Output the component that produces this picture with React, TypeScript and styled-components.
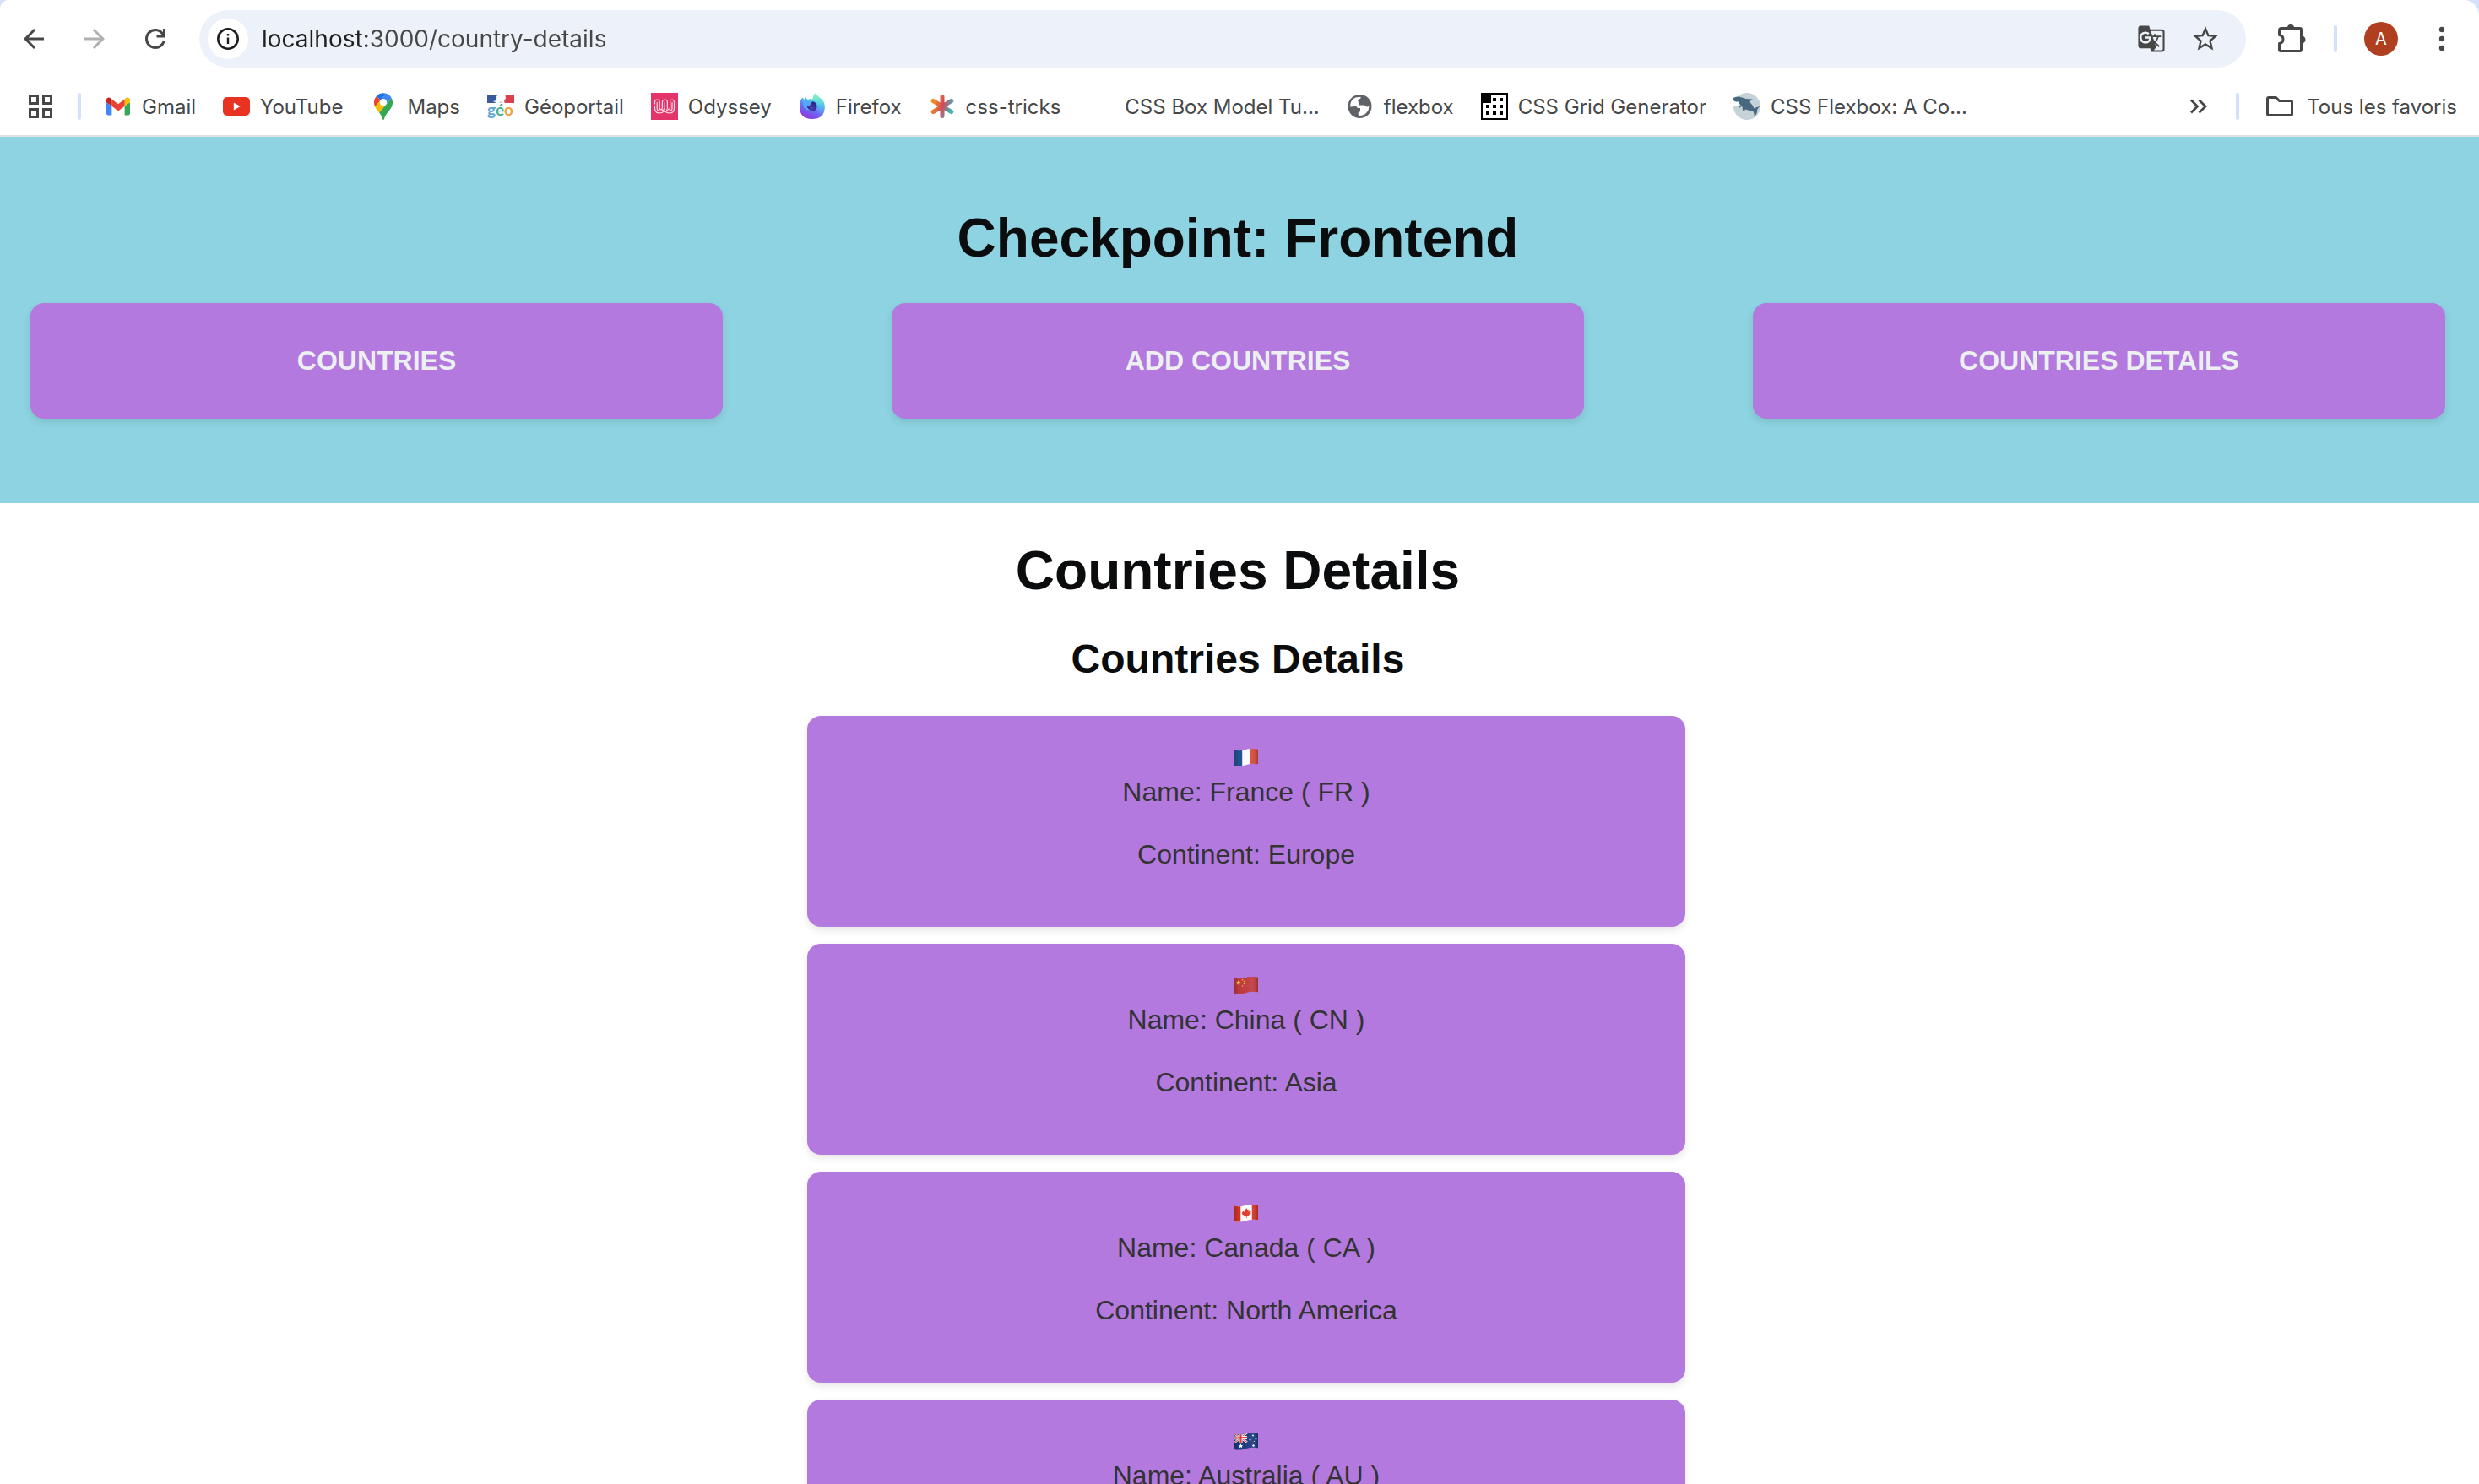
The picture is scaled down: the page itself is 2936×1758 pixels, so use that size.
import React from "react";
import styled, { createGlobalStyle } from "styled-components";
import { MdGTranslate } from "react-icons/md";

const GlobalStyle = createGlobalStyle`
  *, *::before, *::after { box-sizing: border-box; }
  body { margin: 0; background: #d3e1fb; }
  button { border: 0; background: none; padding: 0; font: inherit; color: inherit; cursor: pointer; }
  a { color: inherit; text-decoration: none; }
  svg { display: block; flex: none; }
`;

const Window = styled.div`
  display: flex;
  flex-direction: column;
  height: 100vh;
  overflow: hidden;
`;

/* ---------- browser chrome ---------- */

const Chrome = styled.header`
  flex: none;
  background: #fff;
  border-radius: 10px 18px 0 0;
  border-bottom: 2px solid #dfe1e3;
  color: #474747;
  font-family: Inter, Roboto, sans-serif;
`;

const Toolbar = styled.div`
  display: flex;
  align-items: center;
  height: 92px;
  padding: 0 16px 0 12px;
`;

const NavButtons = styled.div`
  display: flex;
  gap: 16px;
  margin-right: 24px;
`;

const IconButton = styled.button<{ $faded?: boolean }>`
  display: grid;
  place-items: center;
  width: 56px;
  height: 56px;
  color: ${(p) => (p.$faded ? "#b0b0b0" : "#474747")};
`;

const AddressBar = styled.form`
  display: flex;
  flex: 1;
  align-items: center;
  height: 68px;
  padding: 0 20px 0 10px;
  border-radius: 34px;
  background: #edf2fa;
`;

const SiteInfo = styled.button`
  display: grid;
  place-items: center;
  width: 48px;
  height: 48px;
  border-radius: 50%;
  background: #fff;
  color: #1f1f1f;
`;

const AddressInput = styled.input`
  flex: 1;
  min-width: 0;
  height: 40px;
  margin-left: 16px;
  padding: 0;
  border: 0;
  outline: 0;
  background: linear-gradient(90deg, #1f1f1f 124px, #474747 124px);
  background-clip: text;
  -webkit-background-clip: text;
  -webkit-text-fill-color: transparent;
  font-family: inherit;
  font-size: 28px;
`;

const AddressActions = styled.div`
  display: flex;
  gap: 8px;
`;

const ToolbarEnd = styled.div`
  display: flex;
  align-items: center;
  margin-left: 26px;
`;

const Divider = styled.span`
  flex: none;
  width: 4px;
  height: 32px;
  border-radius: 2px;
  background: #d3e1fb;
`;

const Avatar = styled.button`
  width: 40px;
  height: 40px;
  margin: 0 24px 0 32px;
  border-radius: 50%;
  background: #b03f20;
  color: #fff;
  font-size: 20px;
`;

const ExtensionSlot = styled.div`
  margin-right: 22px;
`;

const BookmarkBar = styled.nav`
  display: flex;
  align-items: center;
  height: 68px;
  padding: 0 26px 0 20px;
  font-size: 24px;
`;

const BookmarkList = styled.ul`
  display: flex;
  flex: 1;
  gap: 32px;
  min-width: 0;
  margin: 0 0 0 28px;
  padding: 0;
  list-style: none;
`;

const Bookmark = styled.a`
  display: flex;
  align-items: center;
  gap: 12px;
  white-space: nowrap;
`;

const Favicon = styled.span`
  display: grid;
  place-items: center;
  width: 32px;
  height: 32px;
`;

const BookmarkEnd = styled.div`
  display: flex;
  align-items: center;
  gap: 16px;
`;

const AppsSlot = styled.div`
  display: flex;
  align-items: center;
  gap: 16px;
`;

const AllBookmarks = styled.button`
  display: flex;
  align-items: center;
  gap: 16px;
  margin-left: 16px;
  white-space: nowrap;
`;

/* ---------- page ---------- */

const Page = styled.div`
  flex: 1;
  min-height: 0;
  overflow-y: auto;
  scrollbar-width: none;
  background: #fff;
  color: #0a0c0d;
  font-family: "Liberation Sans", Arial, sans-serif;
  font-size: 32px;
  line-height: 37px;
`;

const Banner = styled.header`
  padding: 84px 40px 100px 36px;
  background: #8dd3e1;
`;

const Title = styled.h1`
  margin: 0 0 41px;
  font-size: 64px;
  line-height: 72px;
  text-align: center;
`;

const Subtitle = styled.h2`
  margin: 0 0 39px;
  font-size: 48px;
  line-height: 56px;
  text-align: center;
`;

const Menu = styled.nav`
  display: grid;
  grid-template-columns: repeat(3, 1fr);
  gap: 200px;
`;

const MenuLink = styled.a`
  padding: 50px 32px;
  border-radius: 16px;
  background: #b379df;
  box-shadow: 0 4px 10px rgba(0, 0, 0, 0.1);
  color: #ecf0f1;
  font-weight: 700;
  text-align: center;
  text-transform: uppercase;
`;

const Main = styled.main`
  padding: 44px 4px 40px 0;
`;

const CardList = styled.ul`
  display: flex;
  flex-direction: column;
  align-items: center;
  gap: 20px;
  margin: 0;
  padding: 0 0 0 20px;
  list-style: none;
`;

const Card = styled.li`
  display: flex;
  flex-direction: column;
  align-items: center;
  width: 100%;
  max-width: 1040px;
  padding: 39px 32px 67px;
  border-radius: 16px;
  background: #b379df;
  box-shadow: 0 4px 10px rgba(0, 0, 0, 0.1);
  color: #333;
`;

const CardLine = styled.p<{ $spaced?: boolean }>`
  margin: ${(p) => (p.$spaced ? "37px" : "12px")} 0 0;
`;

/* ---------- toolbar icons ---------- */

const Glyph = ({ d, size = 36 }: { d: string; size?: number }) => (
  <svg width={size} height={size} viewBox="0 0 24 24" fill="currentColor" aria-hidden="true">
    <path d={d} />
  </svg>
);

const BACK = "M20 11H7.83l5.59-5.59L12 4l-8 8 8 8 1.41-1.41L7.83 13H20v-2z";
const FORWARD = "M4 11h12.17l-5.59-5.59L12 4l8 8-8 8-1.41-1.41L16.17 13H4v-2z";
const RELOAD =
  "M12 20q-3.35 0-5.675-2.325T4 12q0-3.35 2.325-5.675T12 4q1.725 0 3.3.713T18 6.75V4h2v7h-7V9h4.2q-.8-1.4-2.188-2.2T12 6Q9.5 6 7.75 7.75T6 12q0 2.5 1.75 4.25T12 18q1.925 0 3.475-1.1T17.65 14h2.1q-.7 2.65-2.85 4.325T12 20z";
const STAR =
  "m22 9.24-7.19-.62L12 2 9.19 8.63 2 9.24l5.46 4.73L5.82 21 12 17.27 18.18 21l-1.63-7.03L22 9.24zM12 15.4l-3.76 2.27 1-4.28-3.32-2.88 4.38-.38L12 6.1l1.71 4.04 4.38.38-3.32 2.88 1 4.28L12 15.4z";

const InfoIcon = () => (
  <svg width="28" height="28" viewBox="0 0 28 28" aria-hidden="true">
    <circle cx="14" cy="14" r="11.7" fill="none" stroke="currentColor" strokeWidth="2.6" />
    <path d="M12.8 12.4h2.4v7.6h-2.4zM12.8 8h2.4v2.5h-2.4z" fill="currentColor" />
  </svg>
);

const ExtensionIcon = () => (
  <svg width="36" height="36" viewBox="0 0 36 36" aria-hidden="true">
    <path
      d="M3.5 8q0-2.5 2.5-2.5h22q1.500 0 1.500 1.500v24q0 1.500-1.500 1.500H5q-1.500 0-1.500-1.500v-7.500c6-1 6-9 0-10z"
      fill="none"
      stroke="currentColor"
      strokeWidth="3"
      strokeLinejoin="round"
    />
    <path d="M13 5a4 4 0 0 1 8 0zM30 14.500a4.500 4.500 0 0 1 0 9z" fill="currentColor" />
  </svg>
);

const DotsIcon = () => (
  <svg width="8" height="32" viewBox="0 0 8 32" fill="currentColor" aria-hidden="true">
    <circle cx="4" cy="5" r="3.2" />
    <circle cx="4" cy="16" r="3.2" />
    <circle cx="4" cy="27" r="3.2" />
  </svg>
);

const AppsIcon = () => (
  <svg width="28" height="28" viewBox="0 0 28 28" fill="none" stroke="currentColor" strokeWidth="3" aria-hidden="true">
    <path d="M1.500 1.500h9v9h-9zM17.500 1.500h9v9h-9zM1.500 17.500h9v9h-9zM17.500 17.500h9v9h-9z" />
  </svg>
);

const ChevronsIcon = () => (
  <svg width="22" height="20" viewBox="0 0 22 20" fill="none" stroke="currentColor" strokeWidth="2.8" aria-hidden="true">
    <path d="M2 2.500l7.500 7.500L2 17.500M11.500 2.500l7.500 7.500-7.500 7.500" />
  </svg>
);

const FolderIcon = () => (
  <svg width="32" height="24" viewBox="0 0 32 24" fill="none" stroke="currentColor" strokeWidth="3" strokeLinejoin="round" aria-hidden="true">
    <path d="M1.500 3q0-1.500 1.500-1.500h8.500l4 4H29q1.500 0 1.500 1.500v14q0 1.500-1.500 1.500H3q-1.500 0-1.500-1.500z" />
  </svg>
);

/* ---------- favicons ---------- */

const GmailIcon = () => (
  <svg width="28" height="22" viewBox="52 42 88 66" aria-hidden="true">
    <path fill="#4285f4" d="M58 108h14V74L52 59v43c0 3.320 2.690 6 6 6" />
    <path fill="#34a853" d="M120 108h14c3.320 0 6-2.690 6-6V59l-20 15" />
    <path fill="#fbbc04" d="M120 48v26l20-15v-8c0-7.420-8.470-11.650-14.400-7.200" />
    <path fill="#ea4335" d="M72 74V48l24 18 24-18v26L96 92" />
    <path fill="#c5221f" d="M52 51v8l20 15V48l-5.600-4.200c-5.940-4.450-14.400-.22-14.400 7.200" />
  </svg>
);

const YouTubeIcon = () => (
  <svg width="32" height="22" viewBox="0 0 32 22" aria-hidden="true">
    <rect width="32" height="22" rx="5" fill="#ea3223" />
    <path d="M12.800 6.500v9l8-4.500z" fill="#fff" />
  </svg>
);

const MapsIcon = () => (
  <svg width="22" height="32" viewBox="0 0 92.3 132.3" aria-hidden="true">
    <path fill="#1a73e8" d="M60.2 2.2C55.8.8 51 0 46.1 0 32 0 19.3 6.4 10.8 16.5l21.8 18.3L60.2 2.2z" />
    <path fill="#ea4335" d="M10.8 16.5C4.1 24.5 0 34.9 0 46.1c0 8.7 1.7 15.7 4.6 22l28-33.3-21.8-18.3z" />
    <path fill="#4285f4" d="M46.2 28.5c9.8 0 17.7 7.9 17.7 17.7 0 4.3-1.6 8.3-4.2 11.4 0 0 13.9-16.6 27.5-32.7-5.6-10.8-15.3-19-27-22.700L32.600 34.800c3.300-3.800 8.100-6.300 13.600-6.300" />
    <path fill="#fbbc04" d="M46.2 63.8c-9.8 0-17.7-7.9-17.7-17.7 0-4.3 1.5-8.3 4.100-11.300l-28 33.300c4.800 10.600 12.800 19.200 21 29.900l34.100-40.500c-3.300 3.900-8.100 6.300-13.500 6.300" />
    <path fill="#34a853" d="M59.1 109.2c15.400-24.100 33.300-35 33.300-63 0-7.700-1.900-14.900-5.200-21.300L25.600 98c2.600 3.400 5.300 7.300 7.900 11.300 9.400 14.500 6.800 23.100 12.800 23.100s3.400-8.700 12.800-23.200" />
  </svg>
);

const GeoportailIcon = () => (
  <svg width="32" height="32" viewBox="0 0 32 32" aria-hidden="true">
    <path d="M0 2h13v10H0z" fill="#3b5a9c" />
    <path d="M21 2h11v10H20z" fill="#db3f4b" />
    <path d="M13 2c-2 2-3 3-1.500 4l-3 4 1.500 2h11l-2-3 3-2-.5-5z" fill="#fff" />
    <path d="M7 10.500l3.500-3 .8 2-2.500 1.500zM14 12l2-2 2 2z" fill="#b9c4de" />
    <text y="27" fontFamily="Lato, sans-serif" fontWeight="700" fontSize="19">
      <tspan fill="#5fa8d8">g</tspan>
      <tspan fill="#4dab98">é</tspan>
      <tspan fill="#eda23f">o</tspan>
    </text>
  </svg>
);

const OdysseyIcon = () => (
  <svg width="32" height="32" viewBox="0 0 32 32" aria-hidden="true">
    <rect width="32" height="32" fill="#e3356b" />
    <g fill="none" stroke="#fbdbe6" strokeWidth="1.2" strokeLinecap="round">
      <path d="M4.500 13V10.500Q4.500 8.200 7 8.200q3.200 0 3.200 3v6.500q0 2 1.600 2t1.600-2V11q0-3 3-3t3 3v6.500q0 2 1.600 2t1.600-2V8.500" />
      <path d="M4.500 15.500v2.500q0 6 5.500 6 3.500 0 6-2.500 2.500 2.500 6 2.500 5.500 0 5.500-6V11q0-2.800-2.800-2.800" />
      <path d="M7.200 11.500V18q0 3.400 3.200 3.400 5.800 0 5.800-4.900V11.500M18.500 20q1.300 1.600 3.300 1.400 3.200-.2 3.200-3.400v-6.500" />
    </g>
  </svg>
);

const FirefoxIcon = () => (
  <svg width="32" height="32" viewBox="0 0 32 32" aria-hidden="true">
    <defs>
      <linearGradient id="fx-body" x1="0.8" y1="0" x2="0.3" y2="1">
        <stop offset="0.15" stopColor="#7df0c4" />
        <stop offset="0.4" stopColor="#4fc3f0" />
        <stop offset="0.65" stopColor="#6e6cf5" />
        <stop offset="1" stopColor="#8b35dc" />
      </linearGradient>
      <linearGradient id="fx-tail" x1="0.5" y1="0" x2="0.6" y2="1">
        <stop offset="0" stopColor="#8df5b9" />
        <stop offset="0.5" stopColor="#5ad2e8" />
        <stop offset="1" stopColor="#6a7af2" />
      </linearGradient>
      <radialGradient id="fx-globe" cx="0.5" cy="0.7" r="0.6">
        <stop offset="0" stopColor="#4c3fb5" />
        <stop offset="1" stopColor="#2a2582" />
      </radialGradient>
    </defs>
    <path
      d="M4.200 5.500L6.600 8 7.500 5l3.200 3q3-1.500 6-.5 0-4 3.500-7.500 1 3.300 4.300 5.500 6.400 4 6.400 11.500Q30.500 31 15.800 31 1 31 1 16q0-6.500 3.200-10.500z"
      fill="url(#fx-body)"
    />
    <circle cx="15.500" cy="16" r="6" fill="url(#fx-globe)" />
    <path d="M20.200 0q1 3.300 4.300 5.500 6.400 4 6 11.500-1 6.500-6 8.500 2.500-5 1-10-1.300-4-5-5.500-4.800-2-3.800-5.500Q17.500 2.500 20.200 0z" fill="url(#fx-tail)" />
    <path d="M4.500 9q4-1.500 7.200 1 2.500-.8 5 .6-2.500 1-3 3.200-.7 2-4.200 2 1.200 4.200 5 4.700-6.500 1-9-4.500z" fill="#54a8f7" />
  </svg>
);

const CssTricksIcon = () => (
  <svg width="32" height="32" viewBox="0 0 32 32" aria-hidden="true">
    <defs>
      <linearGradient id="ct" gradientUnits="userSpaceOnUse" x1="3" y1="12" x2="29" y2="21">
        <stop offset="0.1" stopColor="#f08a24" />
        <stop offset="0.5" stopColor="#d34a5b" />
        <stop offset="0.9" stopColor="#3fb5ba" />
      </linearGradient>
    </defs>
    <path d="M16 4.500v23M5.200 9.500l21.600 13M26.800 9.500l-21.600 13" stroke="url(#ct)" strokeWidth="5" strokeLinecap="round" />
  </svg>
);

const GlobeIcon = () => (
  <svg width="32" height="32" viewBox="0 0 32 32" aria-hidden="true">
    <circle cx="15.500" cy="16" r="14" fill="#5f6368" />
    <path d="M4.200 16.500Q4 8.500 10.500 5.600 13 4.600 16.500 5v1.500l-2 1q-1.500.8-1.200 2.500.3 1 1.500 1.200l.2 3.300h5.500q1.500 0 1.500 1.500l3 .5 1.200-2Q27 20 23 24q-3.500 3.500-9 3l-.5-3.500 2.500-1.500v-4h-3q-2-3-5-1.800z" fill="#fff" />
  </svg>
);

const GridIcon = () => (
  <svg width="32" height="32" viewBox="0 0 32 32" aria-hidden="true">
    <rect x="1" y="1" width="30" height="30" fill="#fff" stroke="#000" strokeWidth="2" />
    <path
      d="M0 0h12v12H0zM14 6h4v4h-4zM22 6h4v4h-4zM6 14h4v4H6zM14 14h4v4h-4zM22 14h4v4h-4zM6 22h4v4H6zM14 22h4v4h-4zM22 22h4v4h-4z"
      fill="#000"
    />
  </svg>
);

const SharkIcon = () => (
  <svg width="32" height="32" viewBox="0 0 32 32" aria-hidden="true">
    <circle cx="16" cy="16" r="16" fill="#c5d2d7" />
    <path d="M0 6q5-2.500 10-.5l5 1.500q4 0 8 .5-3 .7-3.500 3.500 4 4 5 7.500 2.500-2 7-2.500-3 2-3.500 4.500.5 4-3.500 8 .5-4-1.500-7.500-4 .2-9-1.500-.5 2-2.500 2-1.200-2-.8-4.500Q7 13.500 6 10.500 3 11.500 0 9z" fill="#48687f" />
    <path d="M0 10q3 1 5.500.500l2 3-3 2.500H0z" fill="#fff" />
    <path d="M6.500 15l2.500 1-1.500 2z" fill="#48687f" />
  </svg>
);

const bookmarks: { label: string; href: string; icon?: React.ReactNode }[] = [
  { label: "Gmail", href: "#gmail", icon: <GmailIcon /> },
  { label: "YouTube", href: "#youtube", icon: <YouTubeIcon /> },
  { label: "Maps", href: "#maps", icon: <MapsIcon /> },
  { label: "Géoportail", href: "#geoportail", icon: <GeoportailIcon /> },
  { label: "Odyssey", href: "#odyssey", icon: <OdysseyIcon /> },
  { label: "Firefox", href: "#firefox", icon: <FirefoxIcon /> },
  { label: "css-tricks", href: "#css-tricks", icon: <CssTricksIcon /> },
  { label: "CSS Box Model Tu...", href: "#box-model" },
  { label: "flexbox", href: "#flexbox", icon: <GlobeIcon /> },
  { label: "CSS Grid Generator", href: "#grid-generator", icon: <GridIcon /> },
  { label: "CSS Flexbox: A Co...", href: "#flexbox-guide", icon: <SharkIcon /> },
];

/* ---------- flags ---------- */

const flagArt: Record<string, React.ReactNode> = {
  FR: (
    <>
      <path fill="#245494" d="M0 0h9.300v22H0z" />
      <path fill="#fff" d="M9.300 0h9.400v22H9.300z" />
      <path fill="#d94a38" d="M18.700 0H28v22h-9.300z" />
    </>
  ),
  CN: (
    <>
      <path fill="#c23b3f" d="M0 0h28v22H0z" />
      <path fill="#f8dc3c" d="M4.700 4.300l.8 1.900 2 .1-1.500 1.400.5 2-1.800-1.100-1.800 1.100.5-2-1.500-1.400 2-.1z" />
      <g fill="#f0c23c">
        <circle cx="9.500" cy="3.800" r=".8" />
        <circle cx="11.500" cy="5.500" r=".8" />
        <circle cx="11.500" cy="8.500" r=".8" />
        <circle cx="9.500" cy="11" r=".8" />
      </g>
    </>
  ),
  CA: (
    <>
      <path fill="#fff" d="M0 0h28v22H0z" />
      <path fill="#d83425" d="M0 0h7.300v22H0zM20.700 0H28v22h-7.300z" />
      <path
        fill="#e53a2c"
        d="M14.200 4l1.300 2.200 1.400-.6-.5 3 1.600-1.400.4.900 1.300-.1-.6 1.700.8.600-3 2.500.3 1.200-2.600-.3v2.500h-.7v-2.500l-2.600.6.300-1.300-3-2 .8-.7-.6-1.600 1.400-.1.400-.9 1.500 1.300-.5-3 1.300.4z"
      />
    </>
  ),
  AU: (
    <>
      <path fill="#1c3a80" d="M0 0h28v22H0z" />
      <path d="M0 1.500l15 10M15 0L0 12" stroke="#fff" strokeWidth="2.4" />
      <path d="M0 1.500l15 10M15 0L0 12" stroke="#dc3b42" strokeWidth="1" />
      <path d="M7.500 0v12M0 6.500L15 6" stroke="#fff" strokeWidth="4" />
      <path d="M7.500 0v12M0 6.500L15 6" stroke="#dc3b42" strokeWidth="2.2" />
      <g fill="#fff">
        <path d="M7.500 13.300l.8 1.700 1.700.2-1.200 1.200.4 1.800-1.700-.9-1.700.9.400-1.800L5 15.200l1.700-.2z" />
        <circle cx="22" cy="3.500" r="1" />
        <circle cx="18.500" cy="8.500" r="1" />
        <circle cx="25.500" cy="7.500" r="1" />
        <circle cx="23.500" cy="10.500" r=".6" />
        <circle cx="22.500" cy="15.500" r="1.200" />
      </g>
    </>
  ),
};

const Flag = ({ code, name }: { code: string; name: string }) => (
  <svg width="28" height="21" viewBox="0 0 28 21" role="img" aria-label={name}>
    <defs>
      <clipPath id={`wave-${code}`}>
        <path d="M0 1.500C4 2.800 8 2.300 13 1S23-.4 28 .8V18.300C24 17.200 19 17.500 14 19S4 21.200 0 20z" />
      </clipPath>
      <linearGradient id={`shade-${code}`} x1="0" x2="1">
        <stop offset="0" stopColor="#000" stopOpacity=".2" />
        <stop offset=".2" stopColor="#000" stopOpacity=".02" />
        <stop offset=".7" stopColor="#fff" stopOpacity=".06" />
        <stop offset="1" stopColor="#000" stopOpacity=".22" />
      </linearGradient>
    </defs>
    <g clipPath={`url(#wave-${code})`}>
      {flagArt[code]}
      <path d="M0 0h28v22H0z" fill={`url(#shade-${code})`} />
    </g>
  </svg>
);

const countries = [
  { name: "France", code: "FR", continent: "Europe" },
  { name: "China", code: "CN", continent: "Asia" },
  { name: "Canada", code: "CA", continent: "North America" },
  { name: "Australia", code: "AU", continent: "Oceania" },
];

const BrowserChrome = () => (
  <Chrome>
    <Toolbar>
      <NavButtons>
        <IconButton type="button" aria-label="Retour">
          <Glyph d={BACK} />
        </IconButton>
        <IconButton type="button" aria-label="Avancer" $faded>
          <Glyph d={FORWARD} />
        </IconButton>
        <IconButton type="button" aria-label="Actualiser">
          <Glyph d={RELOAD} />
        </IconButton>
      </NavButtons>
      <AddressBar>
        <SiteInfo type="button" aria-label="Informations sur le site">
          <InfoIcon />
        </SiteInfo>
        <AddressInput aria-label="Adresse" defaultValue="localhost:3000/country-details" spellCheck={false} />
        <AddressActions>
          <IconButton type="button" aria-label="Traduire">
            <MdGTranslate size={34} />
          </IconButton>
          <IconButton type="button" aria-label="Ajouter aux favoris">
            <Glyph d={STAR} />
          </IconButton>
        </AddressActions>
      </AddressBar>
      <ToolbarEnd>
        <ExtensionSlot>
          <IconButton type="button" aria-label="Extensions">
            <ExtensionIcon />
          </IconButton>
        </ExtensionSlot>
        <Divider />
        <Avatar type="button" aria-label="Profil">
          A
        </Avatar>
        <IconButton type="button" aria-label="Menu">
          <DotsIcon />
        </IconButton>
      </ToolbarEnd>
    </Toolbar>
    <BookmarkBar>
      <AppsSlot>
        <IconButton type="button" aria-label="Applications">
          <AppsIcon />
        </IconButton>
        <Divider />
      </AppsSlot>
      <BookmarkList>
        {bookmarks.map((b) => (
          <li key={b.label}>
            <Bookmark href={b.href}>
              <Favicon>{b.icon}</Favicon>
              {b.label}
            </Bookmark>
          </li>
        ))}
      </BookmarkList>
      <BookmarkEnd>
        <IconButton type="button" aria-label="Autres favoris">
          <ChevronsIcon />
        </IconButton>
        <Divider />
        <AllBookmarks type="button">
          <FolderIcon />
          Tous les favoris
        </AllBookmarks>
      </BookmarkEnd>
    </BookmarkBar>
  </Chrome>
);

export default function App() {
  return (
    <Window>
      <GlobalStyle />
      <BrowserChrome />
      <Page>
        <Banner>
          <Title>Checkpoint: Frontend</Title>
          <Menu>
            <MenuLink href="#countries">Countries</MenuLink>
            <MenuLink href="#add">Add countries</MenuLink>
            <MenuLink href="#details">Countries details</MenuLink>
          </Menu>
        </Banner>
        <Main>
          <Title>Countries Details</Title>
          <Subtitle>Countries Details</Subtitle>
          <CardList>
            {countries.map((c) => (
              <Card key={c.code}>
                <Flag code={c.code} name={c.name} />
                <CardLine>
                  Name: {c.name} ( {c.code} )
                </CardLine>
                <CardLine $spaced>Continent: {c.continent}</CardLine>
              </Card>
            ))}
          </CardList>
        </Main>
      </Page>
    </Window>
  );
}
